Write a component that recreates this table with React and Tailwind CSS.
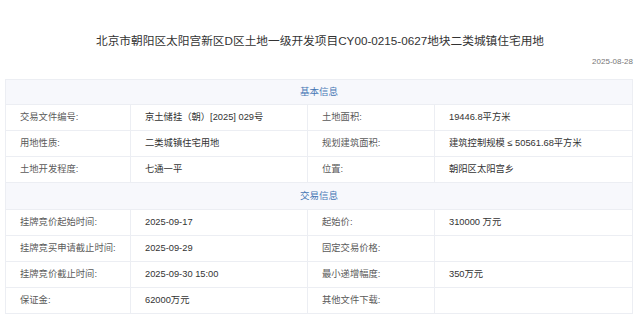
export default function App() {
    const basic = [
        ["交易文件编号:", "京土储挂（朝）[2025] 029号", "土地面积:", "19446.8平方米"],
        ["用地性质:", "二类城镇住宅用地", "规划建筑面积:", "建筑控制规模 ≤ 50561.68平方米"],
        ["土地开发程度:", "七通一平", "位置:", "朝阳区太阳宫乡"],
    ];
    const trade = [
        ["挂牌竞价起始时间:", "2025-09-17", "起始价:", "310000 万元"],
        ["挂牌竞买申请截止时间:", "2025-09-29", "固定交易价格:", ""],
        ["挂牌竞价截止时间:", "2025-09-30 15:00", "最小递增幅度:", "350万元"],
        ["保证金:", "62000万元", "其他文件下载:", ""],
    ];

    const Section = ({ title, h }) => (
        <div className={`col-span-4 flex items-center justify-center border-b border-[#eceef3] bg-[#f7f8fc] text-[9.5px] text-[#4677b4] ${h}`}>
            {title}
        </div>
    );

    const Row = ({ cells }) => (
        <>
            {cells.map((c, i) => (
                <div
                    key={i}
                    className={`flex h-[26px] items-center border-b border-[#eceef3] pl-3.5 text-[9.3px] ${i % 2 === 0 ? "text-[#5a5a5a]" : "text-[#333]"} ${i < 3 ? "border-r" : ""}`}
                >
                    {c}
                </div>
            ))}
        </>
    );

    return (
        <div className="h-[316px] w-[640px] overflow-hidden bg-white font-['Liberation_Sans','Noto_Sans_CJK_SC',sans-serif]">
            <h1 className="pt-[33px] text-center text-[11.7px] leading-4 text-[#333]">
                北京市朝阳区太阳宫新区D区土地一级开发项目CY00-0215-0627地块二类城镇住宅用地
            </h1>
            <div className="mt-[7px] pr-[7px] text-right text-[8px] leading-3 text-[#777]">2025-08-28</div>
            <div className="mt-[11px] ml-[5px] mr-[7px] grid grid-cols-[125px_177px_127px_1fr] border-t border-l border-r border-[#eceef3]">
                <Section title="基本信息" h="h-[25px]" />
                {basic.map((r, i) => (
                    <Row key={i} cells={r} />
                ))}
                <Section title="交易信息" h="h-[27px]" />
                {trade.map((r, i) => (
                    <Row key={i} cells={r} />
                ))}
            </div>
        </div>
    );
}
